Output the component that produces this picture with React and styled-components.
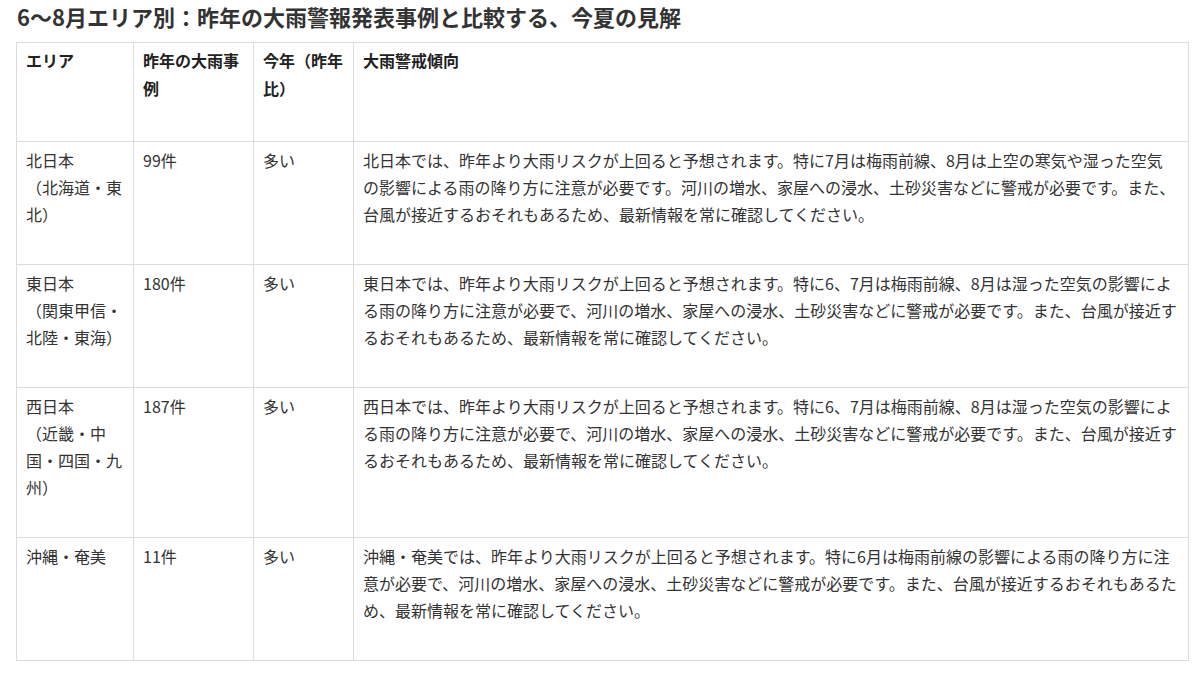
import React from 'react';
import styled, { createGlobalStyle } from 'styled-components';

const GlobalStyle = createGlobalStyle`
  html, body {
    margin: 0;
    padding: 0;
    background: #ffffff;
  }
  body {
    font-family: "Noto Sans CJK JP", "Noto Sans", sans-serif;
    color: #333333;
  }
`;

const Page = styled.div`
  padding: 1px 16px 0 16px;
`;

const Title = styled.h2`
  margin: 0 0 10px 1px;
  font-size: 22px;
  line-height: 31px;
  font-weight: 700;
  color: #333333;
`;

const Table = styled.table`
  width: 1173px;
  border-collapse: collapse;
  table-layout: fixed;
  font-size: 16px;
`;

const HeadCell = styled.th`
  border: 1px solid #dcdcdc;
  padding: 3px 9px 39px 9px;
  line-height: 28px;
  font-weight: 700;
  text-align: left;
  vertical-align: top;
  color: #222222;
`;

const Cell = styled.td`
  border: 1px solid #dcdcdc;
  padding: 5px ${(p) => (p.$wide ? '10px' : '9px')} 36px 9px;
  line-height: 27px;
  text-align: left;
  vertical-align: top;
  color: #333333;
`;

const rows = [
  {
    area: ['北日本', '（北海道・東北）'],
    count: '99件',
    trend: '多い',
    text: '北日本では、昨年より大雨リスクが上回ると予想されます。特に7月は梅雨前線、8月は上空の寒気や湿った空気の影響による雨の降り方に注意が必要です。河川の増水、家屋への浸水、土砂災害などに警戒が必要です。また、台風が接近するおそれもあるため、最新情報を常に確認してください。',
  },
  {
    area: ['東日本', '（関東甲信・北陸・東海）'],
    count: '180件',
    trend: '多い',
    text: '東日本では、昨年より大雨リスクが上回ると予想されます。特に6、7月は梅雨前線、8月は湿った空気の影響による雨の降り方に注意が必要で、河川の増水、家屋への浸水、土砂災害などに警戒が必要です。また、台風が接近するおそれもあるため、最新情報を常に確認してください。',
  },
  {
    area: ['西日本', '（近畿・中国・四国・九州）'],
    count: '187件',
    trend: '多い',
    text: '西日本では、昨年より大雨リスクが上回ると予想されます。特に6、7月は梅雨前線、8月は湿った空気の影響による雨の降り方に注意が必要で、河川の増水、家屋への浸水、土砂災害などに警戒が必要です。また、台風が接近するおそれもあるため、最新情報を常に確認してください。',
  },
  {
    area: ['沖縄・奄美'],
    count: '11件',
    trend: '多い',
    text: '沖縄・奄美では、昨年より大雨リスクが上回ると予想されます。特に6月は梅雨前線の影響による雨の降り方に注意が必要で、河川の増水、家屋への浸水、土砂災害などに警戒が必要です。また、台風が接近するおそれもあるため、最新情報を常に確認してください。',
  },
];

export default function App() {
  return (
    <Page>
      <GlobalStyle />
      <Title>6～8月エリア別：昨年の大雨警報発表事例と比較する、今夏の見解</Title>
      <Table>
        <colgroup>
          <col style={{ width: 117 }} />
          <col style={{ width: 120 }} />
          <col style={{ width: 100 }} />
          <col />
        </colgroup>
        <thead>
          <tr>
            <HeadCell>エリア</HeadCell>
            <HeadCell>昨年の大雨事例</HeadCell>
            <HeadCell>今年（昨年比）</HeadCell>
            <HeadCell>大雨警戒傾向</HeadCell>
          </tr>
        </thead>
        <tbody>
          {rows.map((row) => (
            <tr key={row.area[0]}>
              <Cell>
                {row.area.map((part, i) => (
                  <React.Fragment key={part}>
                    {i > 0 && <br />}
                    {part}
                  </React.Fragment>
                ))}
              </Cell>
              <Cell>{row.count}</Cell>
              <Cell>{row.trend}</Cell>
              <Cell $wide>{row.text}</Cell>
            </tr>
          ))}
        </tbody>
      </Table>
    </Page>
  );
}
